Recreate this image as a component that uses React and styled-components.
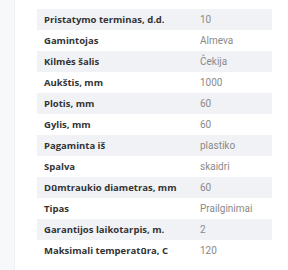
import React from "react";
import styled, { createGlobalStyle } from "styled-components";

const GlobalStyle = createGlobalStyle`
  html, body {
    margin: 0;
    padding: 0;
    background: #fff;
  }
`;

const Page = styled.div`
  display: flex;
  width: 288px;
  height: 270px;
  overflow: hidden;
`;

const SideStrip = styled.div`
  width: 14px;
  flex: none;
  background: #f7f8fa;
  border-right: 1px solid #eceef2;
`;

const Content = styled.div`
  flex: 1;
  padding: 9px 16px 0 22px;
`;

const SpecTable = styled.table`
  width: 235px;
  border-collapse: collapse;
`;

const Row = styled.tr`
  height: 21px;
  background: ${props => (props.striped ? "#f1f2f6" : "#fff")};
`;

const Label = styled.td`
  width: 149px;
  padding: 0 0 0 7px;
  font-family: "Open Sans", sans-serif;
  font-weight: 700;
  font-size: 9.5px;
  color: #333;
  white-space: nowrap;
`;

const Value = styled.td`
  padding: 0 0 0 7px;
  font-family: Roboto, sans-serif;
  font-size: 10px;
  color: #8a8a8a;
  white-space: nowrap;
`;

const specs = [
  ["Pristatymo terminas, d.d.", "10"],
  ["Gamintojas", "Almeva"],
  ["Kilmės šalis", "Čekija"],
  ["Aukštis, mm", "1000"],
  ["Plotis, mm", "60"],
  ["Gylis, mm", "60"],
  ["Pagaminta iš", "plastiko"],
  ["Spalva", "skaidri"],
  ["Dūmtraukio diametras, mm", "60"],
  ["Tipas", "Prailginimai"],
  ["Garantijos laikotarpis, m.", "2"],
  ["Maksimali temperatūra, C", "120"],
];

const App = () => (
  <>
    <GlobalStyle />
    <Page>
      <SideStrip />
      <Content>
        <SpecTable>
          <tbody>
            {specs.map(([label, value], i) => (
              <Row key={label} striped={i % 2 === 0}>
                <Label>{label}</Label>
                <Value>{value}</Value>
              </Row>
            ))}
          </tbody>
        </SpecTable>
      </Content>
    </Page>
  </>
);

export default App;
